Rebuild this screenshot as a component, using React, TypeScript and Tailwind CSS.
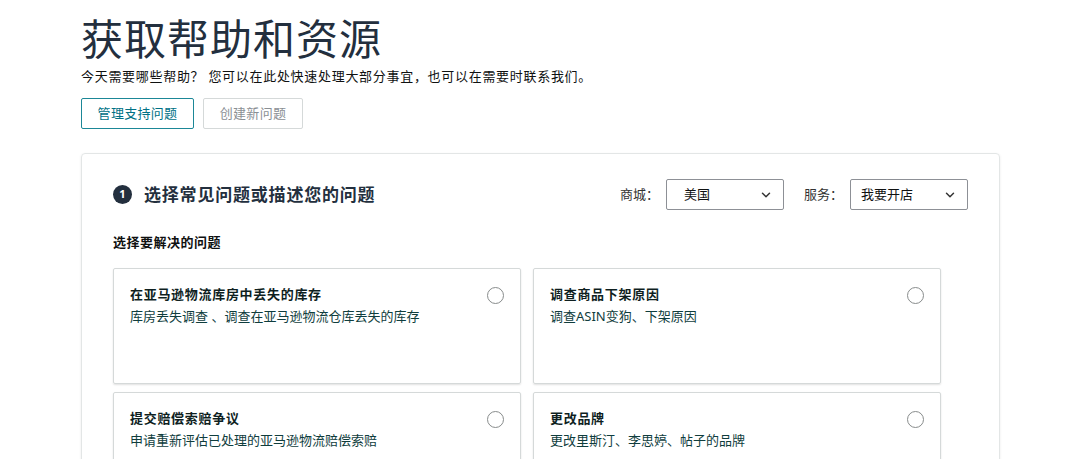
import { ChevronDown } from "lucide-react";

const issues = [
  { title: "在亚马逊物流库房中丢失的库存", desc: "库房丢失调查 、调查在亚马逊物流仓库丢失的库存" },
  { title: "调查商品下架原因", desc: "调查ASIN变狗、下架原因" },
  { title: "提交赔偿索赔争议", desc: "申请重新评估已处理的亚马逊物流赔偿索赔" },
  { title: "更改品牌", desc: "更改里斯汀、李思婷、帖子的品牌" },
];

function Select({ value, pad }: { value: string; pad: string }) {
  return (
    <div className={`flex h-[31px] w-[118px] items-center justify-between border border-[#8d9096] rounded-[2px] bg-white pr-[10px] ${pad}`}>
      <span className="text-[13px] text-[#0f1111]">{value}</span>
      <ChevronDown size={14} strokeWidth={2.5} className="text-[#333]" />
    </div>
  );
}

export default function App() {
  return (
    <div
      className="h-[459px] w-[1080px] overflow-hidden bg-white pl-[81px] text-[#0f1111]"
      style={{ fontFamily: '"Noto Sans", "Noto Sans CJK SC", sans-serif' }}
    >
      <h1 className="pt-[13px] text-[42px] leading-[52px] font-normal tracking-[1px] text-[#232f3e]">
        获取帮助和资源
      </h1>
      <p className="mt-[2px] text-[13px] leading-[18px] tracking-[0.7px] text-[#0f1111]">
        今天需要哪些帮助？ 您可以在此处快速处理大部分事宜，也可以在需要时联系我们。
      </p>
      <div className="mt-[13px] flex gap-[9px]">
        <button className="h-[31px] w-[113px] rounded-[2px] border border-[#1b8797] text-[13px] tracking-[0.3px] text-[#007185]">
          管理支持问题
        </button>
        <button className="h-[31px] w-[100px] rounded-[2px] border border-[#d5d9d9] text-[13px] tracking-[0.3px] text-[#8a8f94]">
          创建新问题
        </button>
      </div>

      <div className="mt-[24px] w-[919px] rounded-[4px] border border-[#e3e6e6] pt-[25px] pl-[31px] pr-[31px] shadow-[0_1px_3px_rgba(0,0,0,0.08)]">
        <div className="flex items-center justify-between">
          <div className="flex items-center gap-[12px]">
            <span className="flex h-[19px] w-[19px] items-center justify-center rounded-full bg-[#232f3e] text-[11px] font-bold text-white">
              1
            </span>
            <h2 className="text-[17px] font-bold tracking-[0.8px] text-[#232f3e]">选择常见问题或描述您的问题</h2>
          </div>
          <div className="flex items-center">
            <span className="mr-[7px] text-[13px] text-[#333]">商城：</span>
            <Select value="美国" pad="pl-[17px]" />
            <span className="ml-[20px] mr-[7px] text-[13px] text-[#333]">服务：</span>
            <Select value="我要开店" pad="pl-[10px]" />
          </div>
        </div>

        <h3 className="mt-[23px] text-[13px] font-bold tracking-[0.5px] text-[#0f1111]">选择要解决的问题</h3>

        <div className="mt-[15px] grid w-[828px] grid-cols-2 gap-x-[12px] gap-y-[8px]">
          {issues.map((it) => (
            <div
              key={it.title}
              className="flex h-[116px] items-start justify-between rounded-[2px] border border-[#d5d9d9] px-[16px] pt-[16px] shadow-[0_1px_2px_rgba(0,0,0,0.12)]"
            >
              <div>
                <div className="text-[13px] leading-[19px] font-bold tracking-[0.7px] text-[#0f1f1f]">{it.title}</div>
                <div className="mt-[3px] text-[13px] leading-[18px] text-[#0f3d3d]">{it.desc}</div>
              </div>
              <span className="mt-[2px] h-[17px] w-[17px] rounded-full border-[1.5px] border-[#888c8c] bg-white" />
            </div>
          ))}
        </div>
      </div>
    </div>
  );
}
